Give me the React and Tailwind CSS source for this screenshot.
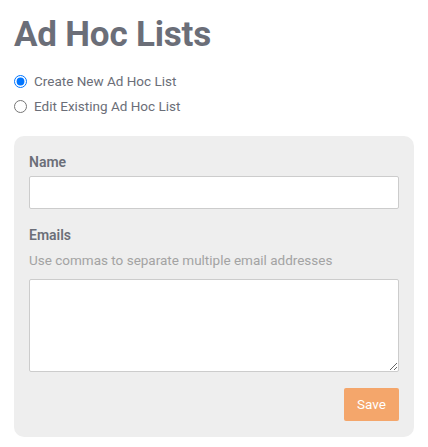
import React from "react";

const font = { fontFamily: "Roboto, 'Liberation Sans', sans-serif" };

export default function App() {
  return (
    <div className="min-h-[447px] bg-white px-[14px] pt-[14px]" style={font}>
      <h1 className="text-[35px] leading-[42px] font-bold text-[#6b6e78] tracking-[-0.2px]">
        Ad Hoc Lists
      </h1>

      <div className="mt-[16px] flex flex-col gap-[6px] text-[13.5px] text-[#6b6e78]">
        <label className="flex items-center gap-[7px] h-[19px]">
          <input type="radio" name="mode" defaultChecked className="m-0 h-[13px] w-[13px]" />
          Create New Ad Hoc List
        </label>
        <label className="flex items-center gap-[7px] h-[19px]">
          <input type="radio" name="mode" className="m-0 h-[13px] w-[13px]" />
          Edit Existing Ad Hoc List
        </label>
      </div>

      <div className="mt-[20px] w-[400px] rounded-[10px] bg-[#eeeeee] px-[15px] pt-[16px] pb-[16px]">
        <div className="text-[14px] font-semibold text-[#6b6e78] leading-[20px]">Name</div>
        <input
          type="text"
          className="mt-[4px] block h-[33px] w-full rounded-[2px] border border-[#cccccc] bg-white px-2 outline-none"
        />

        <div className="mt-[16px] text-[14px] font-semibold text-[#6b6e78] leading-[20px]">Emails</div>
        <div className="mt-[6px] text-[13.5px] text-[#a3a3a3] leading-[18px]">
          Use commas to separate multiple email addresses
        </div>
        <textarea className="mt-[10px] block h-[93px] w-full rounded-[2px] border border-[#cccccc] bg-white p-2 outline-none" />

        <div className="mt-[16px] flex justify-end">
          <button className="h-[33px] w-[55px] rounded-[2px] bg-[#f4a66b] text-[13.5px] text-white">
            Save
          </button>
        </div>
      </div>
    </div>
  );
}
